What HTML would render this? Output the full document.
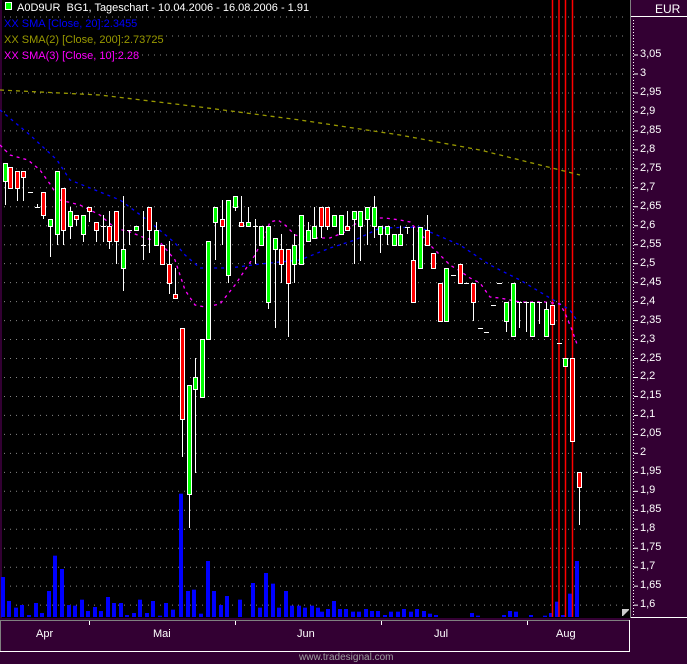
<!DOCTYPE html>
<html><head><meta charset="utf-8"><style>
html,body{margin:0;padding:0;background:#330033;width:687px;height:664px;overflow:hidden;font-family:"Liberation Sans",sans-serif}
#wrap{position:relative;width:687px;height:664px}
svg{position:absolute;left:0;top:0}
.t{position:absolute;left:4px;font-size:11px;line-height:13px;background:#000;white-space:pre}
</style></head><body><div id="wrap">
<svg id="s" width="687" height="664" xmlns="http://www.w3.org/2000/svg"></svg>
<div class="t" style="top:2px;left:5px;color:#fff"><span style="display:inline-block;width:5px;height:6px;background:#00ff00;border:1px solid #fff;margin-right:5px;vertical-align:1px"></span>A0D9UR  BG1, Tageschart - 10.04.2006 - 16.08.2006 - 1.91</div>
<div class="t" style="top:18px;color:#0000ff">XX SMA [Close, 20]:2.3455</div>
<div class="t" style="top:34px;color:#999900">XX SMA(2) [Close, 200]:2.73725</div>
<div class="t" style="top:50px;color:#ff00ff">XX SMA(3) [Close, 10]:2.28</div>
<div style="position:absolute;left:655px;top:2px;font-size:12px;color:#fff">EUR</div>
<div id="lab"></div>
<div style="position:absolute;left:36px;top:628px;font-size:11px;color:#fff">Apr</div>
<div style="position:absolute;left:153px;top:628px;font-size:11px;color:#fff">Mai</div>
<div style="position:absolute;left:297px;top:628px;font-size:11px;color:#fff">Jun</div>
<div style="position:absolute;left:434px;top:628px;font-size:11px;color:#fff">Jul</div>
<div style="position:absolute;left:556px;top:628px;font-size:11px;color:#fff">Aug</div>
<div style="position:absolute;left:299px;top:652px;font-size:10px;color:#a0a0a0">www.tradesignal.com</div>
</div>
<script>
var s=document.getElementById('s'),h='';
h+='<rect x="2" y="0" width="628" height="618" fill="#000"/>';
for(var k=-2;k<=29;k++){var y=55+k*18.97;h+='<line x1="4" x2="628" y1="'+y+'" y2="'+y+'" stroke="#888" stroke-dasharray="1 5"/>';}
var vb=[[3,291],[9,363],[16,383],[22,375],[29,405],[36,369],[42,399],[49,333],[55,227],[62,267],[69,375],[75,377],[82,359],[88,393],[95,381],[101,393],[108,351],[114,369],[121,369],[127,405],[134,399],[140,359],[147,399],[153,363],[160,407],[166,369],[173,389],[181,41],[188,333],[194,329],[201,401],[208,243],[214,333],[221,375],[227,348],[240,359],[253,309],[260,383],[266,279],[273,311],[279,383],[286,333],[292,377],[299,377],[305,383],[312,377],[318,383]];
vb.forEach(function(v){var t=480+v[1]/3;h+='<rect x="'+(v[0]-2)+'" y="'+t+'" width="4" height="'+(617-t)+'" fill="#0000ff"/>';});
var vb2=[[322,395],[328,387],[334,363],[340,387],[346,387],[353,395],[359,395],[366,387],[372,393],[378,393],[385,405],[391,395],[398,395],[404,387],[411,395],[417,387],[424,393],[430,401],[436,405],[472,399],[478,407],[504,405],[510,393],[516,395],[531,405],[545,407],[551,399],[557,365],[563,405],[570,341],[577,243]];
vb2.forEach(function(v){var t=480+v[1]/3;h+='<rect x="'+(v[0]-2)+'" y="'+t+'" width="4" height="'+(617-t)+'" fill="#0000ff"/>';});
[552.5,559,565.5,572.5].forEach(function(x){h+='<line x1="'+x+'" x2="'+x+'" y1="0" y2="617" stroke="#ff0000" stroke-width="1.5"/>';});
function pl(p,c,d){h+='<polyline fill="none" stroke="'+c+'" stroke-width="1.3" stroke-dasharray="'+d+'" points="'+p+'"/>';}
pl("0,90 100,95 200,107 300,120 400,135 480,150 540,165 580,175","#999900","4 4");
pl("0,110 30,135 57,160 70,180 95,190 120,200 150,222 175,243 185,255 200,268 230,268 260,264 300,260 330,248 355,240 380,228 420,227 430,232 460,245 490,265 520,280 540,292 570,310 578,322","#0000ff","3 4");
pl("0,145 10,155 28,160 40,170 50,184 60,200 80,205 100,215 115,228 130,232 145,238 160,242 175,260 185,290 195,305 205,307 220,304 235,285 245,270 255,255 265,235 270,222 278,220 285,225 295,235 310,238 330,238 345,232 358,222 370,218 385,218 400,220 410,222 420,233 430,245 440,255 450,265 460,271 470,278 480,283 490,297 500,298 520,302 545,302 560,304 565,313 572,330 578,347","#ff00ff","3 4");
var c=[[4.7,163,181,163,205,'g'],[10.3,167,188,167,188,'r'],[17.3,171,188,171,201,'r'],[23.3,171,177,171,201,'r'],[30.3,192,192,192,192,'d'],[37.3,207,207,204,207,'d'],[43.3,192,215,192,219,'r'],[50.3,219,226,219,257,'g'],[56.7,171,234,171,245,'g'],[63.3,188,230,188,245,'r'],[70.3,211,226,207,239,'g'],[76.3,215,219,215,226,'r'],[83.3,215,234,215,242,'g'],[89.3,207,211,207,222,'r'],[96.3,222,230,222,242,'r'],[103.3,226,226,215,242,'d'],[109.3,226,241,211,249,'r'],[116.3,211,241,211,264,'r'],[122.7,249,268,196,291,'g'],[129.3,230,230,230,245,'d'],[136.3,226,230,226,230,'g'],[142.7,245,245,211,260,'d'],[149.3,207,230,207,253,'r'],[156.3,230,245,222,245,'g'],[162.3,245,264,245,264,'r'],[169,264,283,241,294,'r'],[175,294,298,268,298,'r'],[182,328,419,328,457,'r'],[189,385,494,385,528,'g'],[195,377,389,358,473,'g'],[202,339,397,339,397,'g'],[208,241,339,241,339,'g'],[215,207,222,207,260,'g'],[222,219,226,200,245,'r'],[228,200,275,200,283,'g'],[235,196,207,196,211,'g'],[241,222,226,196,226,'r'],[248,222,226,207,226,'g'],[255,226,226,219,264,'d'],[261,226,245,226,245,'g'],[268,226,302,226,309,'g'],[275,238,249,238,328,'g'],[281,249,264,234,283,'r'],[288,249,283,249,337,'r'],[294,245,264,234,283,'g'],[301,215,264,215,264,'g'],[308,230,241,222,241,'g'],[314,226,238,207,238,'g'],[321,207,226,207,238,'r'],[327,207,226,207,230,'r'],[334,215,226,215,226,'g'],[341,215,234,215,234,'g'],[347,226,230,211,230,'r'],[354,211,219,211,264,'g'],[360,211,226,211,261,'g'],[367,207,219,207,245,'g'],[374,207,226,196,238,'g'],[380,226,234,226,253,'g'],[387,226,234,226,245,'g'],[394,234,245,234,245,'g'],[400,234,245,226,245,'g'],[407,227,227,227,234,'d'],[413,260,302,227,302,'r'],[420,227,268,227,268,'g'],[427,230,245,215,245,'r'],[433,253,268,253,268,'r'],[440,283,321,283,321,'r'],[446,268,321,268,321,'g'],[453,275,275,275,275,'d'],[460,264,283,264,283,'r'],[466,283,283,283,283,'d'],[473,283,302,283,321,'r'],[480,328,328,328,328,'d'],[486,332,332,332,332,'d'],[493,305,305,305,305,'d'],[499,283,283,283,283,'d'],[506,302,321,302,332,'g'],[513,283,336,283,336,'g'],[519,302,302,302,328,'d'],[526,302,302,302,332,'d'],[532,302,336,302,336,'g'],[539,302,302,302,324,'d'],[546,309,336,302,336,'g'],[552,305,324,305,324,'r'],[559,343,343,343,343,'d'],[565,358,366,358,366,'g'],[572,358,441,358,441,'r'],[579,472,487,472,525,'r']];
c.forEach(function(d){var x=Math.round(d[0]);
 if(d[4]>d[3])h+='<line x1="'+(x+.5)+'" x2="'+(x+.5)+'" y1="'+d[3]+'" y2="'+d[4]+'" stroke="#fff"/>';
 if(d[5]=='d'){h+='<line x1="'+(x-2)+'" x2="'+(x+3)+'" y1="'+(d[1]+.5)+'" y2="'+(d[1]+.5)+'" stroke="#fff"/>';}
 else h+='<rect x="'+(x-1.5)+'" y="'+(d[1]+.5)+'" width="4" height="'+Math.max(d[2]-d[1],3)+'" fill="'+(d[5]=='g'?'#00ff00':'#ff0000')+'" stroke="#fff"/>';
});
h+='<rect x="622" y="609" width="7" height="7" fill="#ccc"/><path d="M623 616 L629 610 L629 616Z" fill="#000"/>';
h+='<line x1="630.5" x2="630.5" y1="0" y2="618" stroke="#808080"/>';
h+='<line x1="631" x2="687" y1="16.5" y2="16.5" stroke="#fff"/>';
h+='<line x1="633.5" x2="633.5" y1="20" y2="617" stroke="#fff" stroke-dasharray="1 2"/>';
h+='<line x1="631" x2="687" y1="617.5" y2="617.5" stroke="#fff"/>';
var lab='';for(var k=0;k<=29;k++){var y=55+k*18.97;h+='<line x1="634" x2="638" y1="'+y+'" y2="'+y+'" stroke="#fff"/>';var p=(3.05-k*0.05);var t=(Math.round(p*100)/100).toString().replace('.',',');lab+='<div style="position:absolute;left:640px;top:'+(y-7)+'px;font-size:11px;color:#fff">'+t+'</div>';}
document.getElementById('lab').innerHTML=lab;
h+='<path d="M0.5 651 V620.5 H629" fill="none" stroke="#808080"/><path d="M629.5 620 V651.5 H0" fill="none" stroke="#fff"/>';
[89,235,381,527].forEach(function(x){h+='<line x1="'+(x+.5)+'" x2="'+(x+.5)+'" y1="621" y2="625" stroke="#fff"/>';});
s.innerHTML=h;
</script></body></html>
